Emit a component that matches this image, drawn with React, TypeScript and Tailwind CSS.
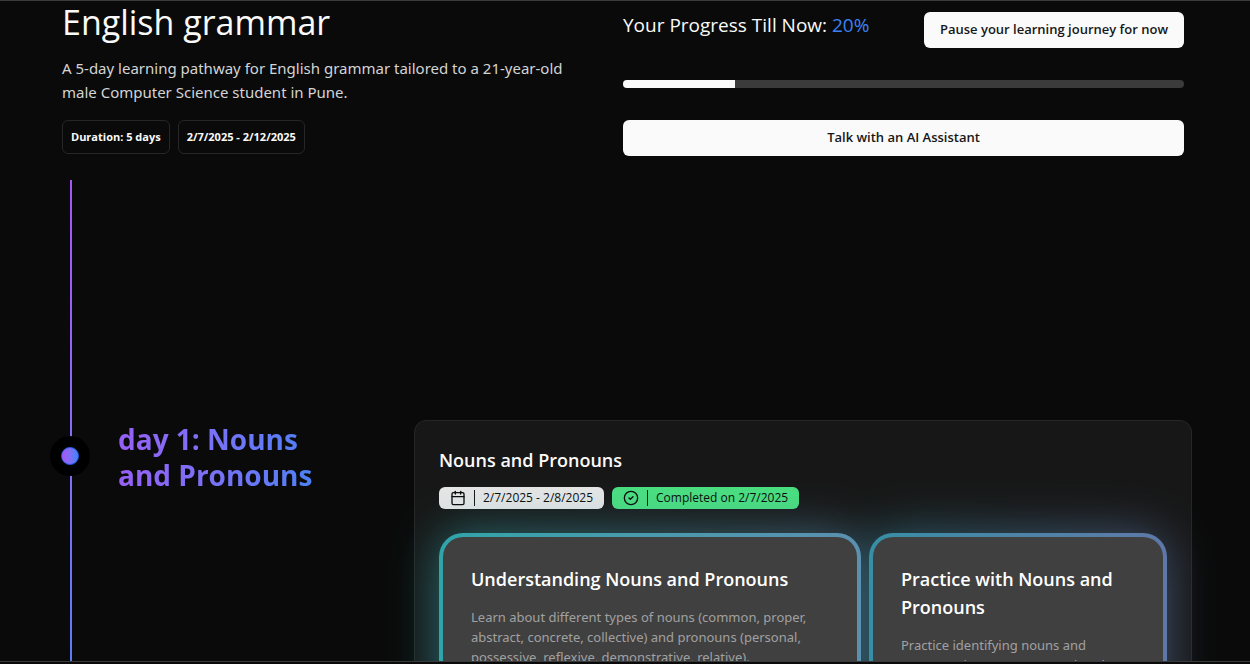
import { CalendarIcon, CircleCheck } from "lucide-react";
import type { ReactNode } from "react";

function GlowCard({ ring, glow, title, children }: { ring: string; glow: string; title: string; children: ReactNode }) {
  return (
    <article className="relative">
      <div className={`pointer-events-none absolute inset-0 rounded-3xl opacity-60 blur-xl ${glow}`} />
      <div className={`relative z-10 h-full rounded-3xl p-1 ${ring}`}>
        <div className="h-full rounded-[20px] bg-[#404040] px-7 pt-7 pb-12">
          <h3 className="text-[18px] leading-7 font-semibold text-white">{title}</h3>
          <p className="mt-3.5 font-['Noto_Sans',sans-serif] text-[13px] leading-5 text-[#a1a1a1]">{children}</p>
        </div>
      </div>
    </article>
  );
}

export default function App() {
  return (
    <div className="h-screen bg-[#0a0a0a] pb-0.5">
      <main className="h-full overflow-hidden border-y border-[#3a3a3a] font-['Open_Sans','Noto_Sans',sans-serif] text-[#fafafa]">
        <header className="mx-auto grid max-w-7xl grid-cols-2 pl-[62px] pr-[66px]">
          <div>
            <h1 className="text-[34px] leading-[43px]">English grammar</h1>
            <p className="mt-3 max-w-[520px] font-['Noto_Sans',sans-serif] text-[15px] leading-6 text-[#d4d4d4]">
              A 5-day learning pathway for English grammar tailored to a 21-year-old male Computer Science student in Pune.
            </p>
            <div className="mt-4 flex gap-2">
              <span className="rounded-md border border-[#262626] px-2 py-2 text-[11px] leading-4 font-bold">Duration: 5 days</span>
              <span className="rounded-md border border-[#262626] px-2 py-2 text-[11px] leading-4 font-bold">2/7/2025 - 2/12/2025</span>
            </div>
          </div>
          <div className="pt-[11px]">
            <div className="flex justify-between">
              <p className="text-[19px] leading-[26px]">
                Your Progress Till Now: <span className="text-[#3b82f6]">20%</span>
              </p>
              <button type="button" className="h-9 rounded-md bg-[#fafafa] px-4 text-[13px] font-semibold text-[#171717]">
                Pause your learning journey for now
              </button>
            </div>
            <div role="progressbar" aria-label="Progress" aria-valuenow={20} className="mt-8 h-2 overflow-hidden rounded-full bg-[#3b3b3b]">
              <div className="h-full w-1/5 bg-[#fafafa]" />
            </div>
            <button type="button" className="mt-8 h-9 w-full rounded-md bg-[#fafafa] text-[13px] font-semibold text-[#171717]">
              Talk with an AI Assistant
            </button>
          </div>
        </header>

        <section className="relative mx-auto mt-6 max-w-7xl pl-[50px] pr-[58px]">
          <div className="absolute top-0 bottom-0 left-[70px] w-[2px] bg-linear-to-b from-[#a855f7] to-[#3b82f6] to-[600px]" />
          <div className="flex items-start pt-60">
            <div className="relative mt-4 flex size-10 shrink-0 items-center justify-center rounded-full bg-black">
              <div className="size-[18px] rounded-full border border-[#2563eb] bg-linear-to-r from-[#a855f7] to-[#3b82f6]" />
            </div>
            <h2 className="ml-7 mt-px w-[200px] shrink-0 bg-linear-to-r from-[#9660f6] to-[#4881f6] bg-clip-text text-[28px] leading-9 font-bold text-transparent">
              day 1: Nouns and Pronouns
            </h2>
            <div className="ml-24 grow rounded-xl border border-[#262626] bg-[#171717] px-6 pt-[25px] pb-6">
              <h2 className="text-[18px] leading-7 font-semibold">Nouns and Pronouns</h2>
              <div className="mt-[13px] flex gap-2 text-[12px] leading-4 font-medium text-[#0a0a0a]">
                <span className="flex h-[22px] items-center rounded-md bg-[#e5e5e5] px-[11px]">
                  <CalendarIcon size={16} strokeWidth={2} />
                  <span className="ml-2 h-4 border-l border-[#171717] pl-2">2/7/2025 - 2/8/2025</span>
                </span>
                <span className="flex h-[22px] items-center rounded-md bg-[#4ade80] px-[11px]">
                  <CircleCheck size={16} strokeWidth={2} />
                  <span className="ml-2 h-4 border-l border-[#171717] pl-2">Completed on 2/7/2025</span>
                </span>
              </div>
              <div className="mt-6 grid grid-cols-[422fr_298fr] gap-2">
                <GlowCard
                  title="Understanding Nouns and Pronouns"
                  ring="bg-linear-to-r from-[#2fa5a9] to-[#5a90b0]"
                  glow="bg-linear-to-r from-[#2fa5a9] to-[#5a90b0]"
                >
                  Learn about different types of nouns (common, proper, abstract, concrete, collective) and pronouns (personal,
                  possessive, reflexive, demonstrative, relative).
                </GlowCard>
                <GlowCard
                  title="Practice with Nouns and Pronouns"
                  ring="bg-linear-to-r from-[#358fa5] to-[#5e78a8]"
                  glow="bg-linear-to-r from-[#358fa5] to-[#5e78a8]"
                >
                  Practice identifying nouns and pronouns in sentences. Read each passage and mark every type.
                </GlowCard>
              </div>
            </div>
          </div>
        </section>
      </main>
    </div>
  );
}
